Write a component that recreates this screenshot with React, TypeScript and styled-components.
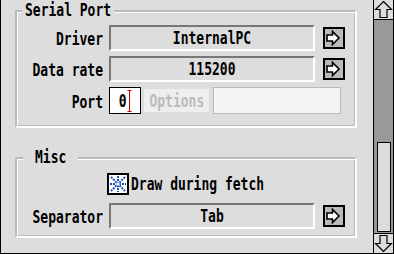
import React from "react";
import styled, { createGlobalStyle } from "styled-components";

const Global = createGlobalStyle`
  html, body { margin: 0; padding: 0; background: #dddddd; overflow: hidden; }
  * { box-sizing: border-box; }
`;

const Window = styled.div`
  display: flex;
  width: 394px;
  height: 254px;
  background: #dddddd;
`;

const Main = styled.div`
  flex: 1;
  border-left: 1px solid #000;
  border-bottom: 1px solid #000;
  padding-top: 10px;
  display: flex;
  flex-direction: column;
`;

const Group = styled.div<{ $pt: number; $pb: number; $mt?: number }>`
  position: relative;
  width: 342px;
  margin-left: 14px;
  margin-top: ${(p) => p.$mt ?? 0}px;
  border: 2px solid;
  border-color: #bbbbbb #ffffff #ffffff #bbbbbb;
  box-shadow: inset 1px 1px 0 #ffffff, inset -1px -1px 0 #bbbbbb;
  padding: ${(p) => p.$pt}px 9px ${(p) => p.$pb}px 0;
`;

const GroupTitle = styled.div<{ $left: number; $pad: number }>`
  position: absolute;
  top: -10px;
  left: ${(p) => p.$left}px;
  padding: 0 ${(p) => p.$pad}px;
  height: 16px;
  background: #dddddd;
  display: flex;
  align-items: center;
`;

const Text = styled.span<{ $muted?: boolean }>`
  display: inline-block;
  font-family: "DejaVu Sans Mono", "Liberation Mono", monospace;
  font-weight: bold;
  font-size: 13px;
  line-height: 16px;
  transform: scaleY(1.4);
  color: ${(p) => (p.$muted ? "#bbbbbb" : "#000000")};
  white-space: pre;
`;

const Grid = styled.div<{ $gap: number }>`
  display: grid;
  grid-template-columns: 92px 214px 22px;
  row-gap: ${(p) => p.$gap}px;
  align-items: center;
`;

const LabelCell = styled.div`
  padding-right: 6px;
  text-align: right;
`;

const Field = styled.div`
  width: 206px;
  height: 26px;
  border: 2px solid;
  border-color: #777777 #ffffff #ffffff #777777;
  display: flex;
  align-items: center;
  justify-content: center;
`;

const MenuButton = styled.div`
  width: 22px;
  height: 22px;
  border: 2px solid #000;
  background: #bbbbbb;
  display: flex;
  align-items: center;
  justify-content: center;
`;

const Span2 = styled.div<{ $shift?: number }>`
  grid-column: 2 / 4;
  display: flex;
  align-items: center;
  margin-left: ${(p) => p.$shift ?? 0}px;
`;

const Writable = styled.div`
  width: 33px;
  height: 27px;
  border: 1px solid #000;
  background: #ffffff;
  display: flex;
  align-items: center;
  justify-content: center;
  margin-right: 3px;
`;

const Ghost = styled.div<{ $w: number; $border?: boolean }>`
  width: ${(p) => p.$w}px;
  height: ${(p) => (p.$border ? 27 : 23)}px;
  background: ${(p) => (p.$border ? "#f4f4f4" : "#eeeeee")};
  border: ${(p) => (p.$border ? "1px solid #bbbbbb" : "none")};
  display: flex;
  align-items: center;
  justify-content: center;
  margin-right: 4px;
`;

const Check = styled.div`
  width: 22px;
  height: 22px;
  border: 2px solid #000;
  background: #ffffff;
  display: flex;
  align-items: center;
  justify-content: center;
  margin-right: 2px;
`;

const ScrollBar = styled.div`
  width: 21px;
  height: 254px;
  border-left: 1px solid #000;
  border-right: 1px solid #000;
  border-bottom: 1px solid #000;
  display: flex;
  flex-direction: column;
`;

const ArrowBox = styled.div<{ $top?: boolean }>`
  height: 20px;
  background: #dddddd;
  ${(p) => (p.$top ? "border-bottom: 1px solid #000;" : "border-top: 1px solid #000;")}
  display: flex;
  align-items: center;
  justify-content: center;
`;

const Trough = styled.div`
  flex: 1;
  background: #999999;
  display: flex;
  flex-direction: column;
  justify-content: flex-end;
  padding: 0 2px 1px 3px;
`;

const Slider = styled.div`
  height: 90px;
  border: 1px solid #000;
  background: #dddddd;
`;

const MenuArrow = () => (
  <svg width="18" height="18" viewBox="0 0 18 18">
    <path
      d="M2 6 H7.5 V2.5 L14 9 L7.5 15.5 V12 H2 Z"
      fill="#ffffff"
      stroke="#000"
      strokeWidth="1.6"
      strokeLinejoin="miter"
    />
  </svg>
);

const ScrollArrow = ({ down }: { down?: boolean }) => (
  <svg
    width="19"
    height="19"
    viewBox="0 0 19 19"
    style={down ? { transform: "rotate(180deg)" } : undefined}
  >
    <path
      d="M9.5 1.5 L17.5 9.5 H13 V17.5 H6 V9.5 H1.5 Z"
      fill="none"
      stroke="#000"
      strokeWidth="1.2"
    />
  </svg>
);

const Star = () => (
  <svg width="18" height="18" viewBox="0 0 18 18">
    <g stroke="#1f4fbf" strokeWidth="2" strokeDasharray="2 1">
      <line x1="2" y1="2" x2="16" y2="16" />
      <line x1="16" y1="2" x2="2" y2="16" />
      <line x1="9" y1="1" x2="9" y2="17" />
      <line x1="1" y1="9" x2="17" y2="9" />
    </g>
    <rect x="7.5" y="7.5" width="3" height="3" fill="#ffffff" />
  </svg>
);

const Caret = () => (
  <svg width="5" height="22" viewBox="0 0 5 22">
    <g stroke="#d00000" strokeWidth="1">
      <line x1="2.5" y1="1" x2="2.5" y2="21" />
      <line x1="0.5" y1="0.5" x2="4.5" y2="0.5" />
      <line x1="0.5" y1="21.5" x2="4.5" y2="21.5" />
    </g>
  </svg>
);

const rows = [
  { label: "Driver", value: "InternalPC" },
  { label: "Data rate", value: "115200" },
];

export default function App() {
  return (
    <>
      <Global />
      <Window>
        <Main>
          <Group $pt={13} $pb={12}>
            <GroupTitle $left={5} $pad={3}>
              <Text>Serial Port</Text>
            </GroupTitle>
            <Grid $gap={5}>
              {rows.map((r) => (
                <React.Fragment key={r.label}>
                  <LabelCell>
                    <Text>{r.label}</Text>
                  </LabelCell>
                  <Field>
                    <Text>{r.value}</Text>
                  </Field>
                  <MenuButton>
                    <MenuArrow />
                  </MenuButton>
                </React.Fragment>
              ))}
              <LabelCell>
                <Text>Port</Text>
              </LabelCell>
              <Span2>
                <Writable>
                  <Text>0</Text>
                  <Caret />
                </Writable>
                <Ghost $w={66}>
                  <Text $muted>Options</Text>
                </Ghost>
                <Ghost $w={130} $border />
              </Span2>
            </Grid>
          </Group>
          <Group $pt={14} $pb={7} $mt={29}>
            <GroupTitle $left={6} $pad={12}>
              <Text>Misc</Text>
            </GroupTitle>
            <Grid $gap={8}>
              <Span2 $shift={-2}>
                <Check>
                  <Star />
                </Check>
                <Text>Draw during fetch</Text>
              </Span2>
              <LabelCell>
                <Text>Separator</Text>
              </LabelCell>
              <Field>
                <Text>Tab</Text>
              </Field>
              <MenuButton>
                <MenuArrow />
              </MenuButton>
            </Grid>
          </Group>
        </Main>
        <ScrollBar>
          <ArrowBox $top>
            <ScrollArrow />
          </ArrowBox>
          <Trough>
            <Slider />
          </Trough>
          <ArrowBox>
            <ScrollArrow down />
          </ArrowBox>
        </ScrollBar>
      </Window>
    </>
  );
}
